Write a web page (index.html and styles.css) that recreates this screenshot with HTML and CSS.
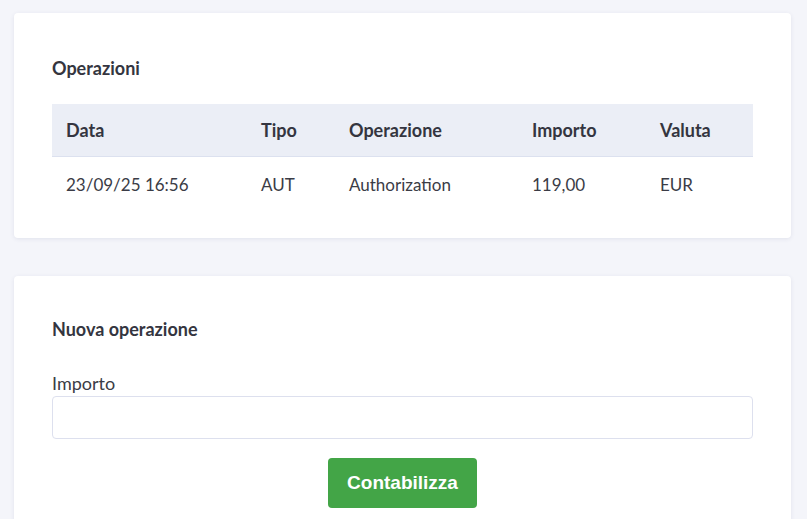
FILE: index.html
```html
<!DOCTYPE html>
<html lang="it">
<head>
<meta charset="utf-8">
<title>Operazioni</title>
<link rel="stylesheet" href="styles.css">
</head>
<body>
<main class="page">
  <section class="card card-ops">
    <h2 class="card-title">Operazioni</h2>
    <table class="ops">
      <colgroup>
        <col class="c1"><col class="c2"><col class="c3"><col class="c4"><col class="c5">
      </colgroup>
      <thead>
        <tr><th>Data</th><th>Tipo</th><th>Operazione</th><th>Importo</th><th>Valuta</th></tr>
      </thead>
      <tbody>
        <tr><td>23/09/25 16:56</td><td>AUT</td><td>Authorization</td><td>119,00</td><td>EUR</td></tr>
      </tbody>
    </table>
  </section>
  <section class="card card-new">
    <h2 class="card-title">Nuova operazione</h2>
    <form class="form">
      <label class="label" for="importo">Importo</label>
      <input class="input" id="importo" type="text">
      <div class="actions">
        <button class="btn" type="button">Contabilizza</button>
      </div>
    </form>
  </section>
</main>
</body>
</html>
```
FILE: styles.css
```css
* { box-sizing: border-box; }
html, body { margin: 0; height: 100%; }
body {
  background: #f4f5fa;
  font-family: "Lato", "Open Sans", sans-serif;
  color: #333541;
  overflow: hidden;
}
.page {
  display: flex;
  flex-direction: column;
  gap: 38px;
  padding: 13px 16px 0 14px;
}
.card {
  background: #fff;
  border-radius: 4px;
  box-shadow: 0 1px 4px rgba(60, 70, 120, 0.10);
  padding: 0 38px;
}
.card-ops { padding-top: 43px; padding-bottom: 26px; }
.card-new { padding-top: 41px; padding-bottom: 20px; }
.card-title {
  margin: 0;
  font-size: 18px;
  line-height: 24px;
  font-weight: 700;
  color: #343540;
}
.ops {
  width: 100%;
  margin-top: 24px;
  border-collapse: collapse;
  table-layout: fixed;
  font-size: 17px;
}
.c1 { width: 195px; }
.c2 { width: 88px; }
.c3 { width: 183px; }
.c4 { width: 128px; }
.c5 { width: auto; }
.ops th {
  background: #ebeef6;
  text-align: left;
  font-weight: 700;
  font-size: 18px;
  height: 52px;
  padding: 0 14px;
  border-bottom: 1px solid #dce1ef;
  color: #343540;
}
.ops td {
  height: 56px;
  padding: 0 14px;
  color: #3b3c46;
}
.form { display: flex; flex-direction: column; margin-top: 30px; }
.label {
  font-size: 18px;
  line-height: 24px;
  color: #3b3c46;
  margin-bottom: 1px;
}
.input {
  height: 43px;
  border: 1px solid #dde0ee;
  border-radius: 4px;
  background: #fff;
  font: inherit;
}
.actions { display: flex; justify-content: center; margin-top: 19px; }
.btn {
  height: 50px;
  padding: 0 19px;
  border: none;
  border-radius: 4px;
  background: #43a547;
  color: #fff;
  font-family: "Liberation Sans", Arial, sans-serif;
  font-weight: 700;
  font-size: 19px;
}
```
